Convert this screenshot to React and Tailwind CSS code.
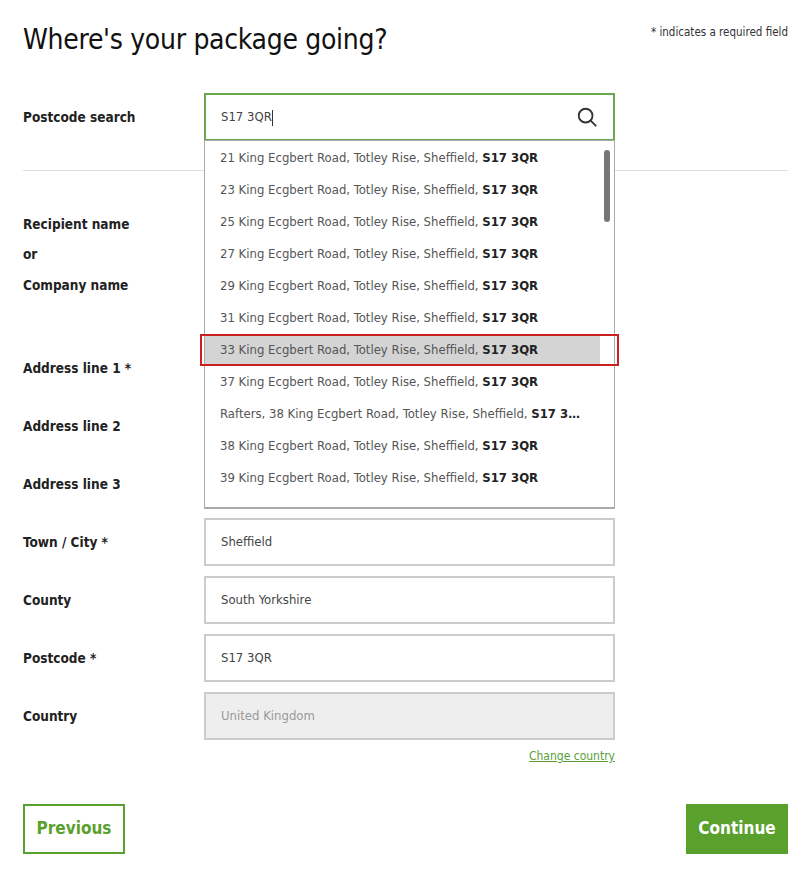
import React from "react";

const font = { fontFamily: '"DejaVu Sans Condensed", "Liberation Sans Narrow", "Liberation Sans", sans-serif' };

const addresses = [
  "21 King Ecgbert Road, Totley Rise, Sheffield, ",
  "23 King Ecgbert Road, Totley Rise, Sheffield, ",
  "25 King Ecgbert Road, Totley Rise, Sheffield, ",
  "27 King Ecgbert Road, Totley Rise, Sheffield, ",
  "29 King Ecgbert Road, Totley Rise, Sheffield, ",
  "31 King Ecgbert Road, Totley Rise, Sheffield, ",
  "33 King Ecgbert Road, Totley Rise, Sheffield, ",
  "37 King Ecgbert Road, Totley Rise, Sheffield, ",
  "Rafters, 38 King Ecgbert Road, Totley Rise, Sheffield, ",
  "38 King Ecgbert Road, Totley Rise, Sheffield, ",
  "39 King Ecgbert Road, Totley Rise, Sheffield, ",
];

const Field = ({ label, value, disabled }) => (
  <div className="flex items-center h-[58px]">
    <label className="w-[181px] text-[13.5px] font-bold text-[#222]">{label}</label>
    <div
      className={`w-[411px] h-[48px] border-2 border-[#ccc] flex items-center px-[15px] text-[13px] ${
        disabled ? "bg-[#eee] text-[#999]" : "bg-white text-[#444]"
      }`}
    >
      {value}
    </div>
  </div>
);

export default function App() {
  return (
    <div className="w-[811px] h-[881px] bg-white px-[23px] relative" style={font}>
      <div className="flex justify-between items-start pt-[22px]">
        <h1 className="text-[28px] tracking-[-0.3px] text-[#111] leading-[36px]">Where's your package going?</h1>
        <span className="text-[11.5px] text-[#333] mt-[2px]">* indicates a required field</span>
      </div>

      <div className="flex items-center mt-[35px] relative">
        <label className="w-[181px] text-[13.5px] font-bold text-[#222]">Postcode search</label>
        <div className="relative w-[411px]">
          <div className="h-[48px] border-2 border-[#6aa84f] flex items-center justify-between px-[15px] text-[13px] text-[#444]">
            <span>S17 3QR<span className="inline-block w-px h-[16px] bg-[#333] align-middle" /></span>
            <svg width="22" height="22" viewBox="0 0 24 24" fill="none" stroke="#333" strokeWidth="2" strokeLinecap="round">
              <circle cx="10.5" cy="10.5" r="7.5" />
              <path d="M16 16l5.5 5.5" />
            </svg>
          </div>
          <div className="absolute left-0 top-[47px] w-[411px] h-[369px] bg-white border border-[#aaa] border-b-2 z-10 pt-[1px]">
            {addresses.map((a, i) => (
              <div
                key={i}
                className={`relative h-[32px] flex items-center px-[15px] text-[13px] text-[#555] whitespace-nowrap ${
                  i === 6 ? "bg-[#d4d4d4] mr-[14px]" : ""
                }`}
              >
                {i === 6 && (
                  <div className="absolute left-[-5px] top-0 bottom-0 w-[419px] border-2 border-[#cc1f1f]" />
                )}
                <span>
                  {a}
                  <b className="text-[#222]">{i === 8 ? "S17 3…" : "S17 3QR"}</b>
                </span>
              </div>
            ))}
            <div className="absolute right-[4px] top-[9px] w-[6px] h-[72px] rounded-full bg-[#777]" />
          </div>
        </div>
      </div>

      <div className="border-t border-[#ddd] mt-[29px]" />

      <div className="flex pt-[43px] h-[168px]">
        <div className="w-[181px] text-[13.5px] font-bold text-[#222] flex flex-col gap-[10px]">
          <span>Recipient name</span>
          <span>or</span>
          <span>Company name</span>
        </div>
      </div>

      <Field label="Address line 1 *" value="" />
      <Field label="Address line 2" value="" />
      <Field label="Address line 3" value="" />
      <Field label="Town / City *" value="Sheffield" />
      <Field label="County" value="South Yorkshire" />
      <Field label="Postcode *" value="S17 3QR" />
      <Field label="Country" value="United Kingdom" disabled />

      <div className="w-[592px] flex justify-end mt-[2px]">
        <a className="text-[12px] text-[#5a9e3a] underline">Change country</a>
      </div>

      <div className="flex justify-between mt-[39px]">
        <button className="w-[102px] h-[50px] border-2 border-[#5aa02c] text-[#5aa02c] font-bold text-[17px] bg-white">
          Previous
        </button>
        <button className="w-[102px] h-[50px] bg-[#5aa02c] text-white font-bold text-[17px]">Continue</button>
      </div>
    </div>
  );
}
